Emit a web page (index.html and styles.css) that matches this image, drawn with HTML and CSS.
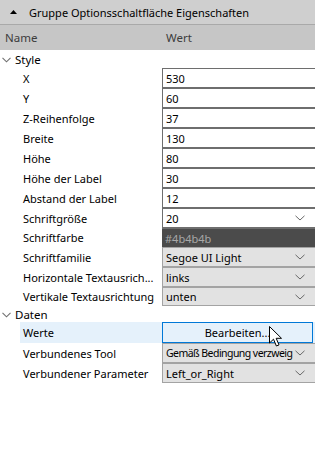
FILE: index.html
```html
<!DOCTYPE html>
<html>
<head>
<meta charset="utf-8">
<link rel="stylesheet" href="styles.css">
</head>
<body>
<div class="panel">
  <div class="titlebar">
    <svg class="tri" width="7" height="4" viewBox="0 0 7 4"><path d="M0 4 L3.5 0 L7 4 Z" fill="#000"/></svg>
    <span>Gruppe Optionsschaltfläche Eigenschaften</span>
  </div>
  <div class="colhead">
    <span class="c-name">Name</span>
    <span class="c-wert">Wert</span>
  </div>

  <div class="group">
    <svg class="chev" width="9" height="6" viewBox="0 0 9 6"><path d="M0.5 0.8 L4.5 4.8 L8.5 0.8" fill="none" stroke="#707070" stroke-width="1.1"/></svg>
    <span>Style</span>
  </div>
  <div class="row"><span class="lbl">X</span><div class="val text">530</div></div>
  <div class="row"><span class="lbl">Y</span><div class="val text">60</div></div>
  <div class="row"><span class="lbl">Z-Reihenfolge</span><div class="val text">37</div></div>
  <div class="row"><span class="lbl">Breite</span><div class="val text">130</div></div>
  <div class="row"><span class="lbl">Höhe</span><div class="val text">80</div></div>
  <div class="row"><span class="lbl">Höhe der Label</span><div class="val text">30</div></div>
  <div class="row"><span class="lbl">Abstand der Label</span><div class="val text">12</div></div>
  <div class="row"><span class="lbl">Schriftgröße</span><div class="val text combo"><span class="vt">20</span><svg class="dd" width="10" height="6" viewBox="0 0 10 6"><path d="M0.5 0.8 L5 5 L9.5 0.8" fill="none" stroke="#6a6a6a" stroke-width="1"/></svg></div></div>
  <div class="row short"><span class="lbl">Schriftfarbe</span><div class="val color">#4b4b4b</div></div>
  <div class="row"><span class="lbl">Schriftfamilie</span><div class="val select"><span class="vt">Segoe UI Light</span><svg class="dd" width="10" height="6" viewBox="0 0 10 6"><path d="M0.5 0.8 L5 5 L9.5 0.8" fill="none" stroke="#6a6a6a" stroke-width="1"/></svg></div></div>
  <div class="row"><span class="lbl">Horizontale Textausrich...</span><div class="val select"><span class="vt">links</span><svg class="dd" width="10" height="6" viewBox="0 0 10 6"><path d="M0.5 0.8 L5 5 L9.5 0.8" fill="none" stroke="#6a6a6a" stroke-width="1"/></svg></div></div>
  <div class="row short"><span class="lbl">Vertikale Textausrichtung</span><div class="val select"><span class="vt">unten</span><svg class="dd" width="10" height="6" viewBox="0 0 10 6"><path d="M0.5 0.8 L5 5 L9.5 0.8" fill="none" stroke="#6a6a6a" stroke-width="1"/></svg></div></div>

  <div class="group g2">
    <svg class="chev" width="9" height="6" viewBox="0 0 9 6"><path d="M0.5 0.8 L4.5 4.8 L8.5 0.8" fill="none" stroke="#707070" stroke-width="1.1"/></svg>
    <span>Daten</span>
  </div>
  <div class="row selected"><span class="lbl">Werte</span><div class="val btnwrap"><div class="btn">Bearbeiten...</div>
    <svg class="cursor" width="14" height="22" viewBox="0 0 14 22"><path d="M0.5 0.5 L0.5 17 L4.5 13.2 L7.4 20 L10 18.9 L7.2 12.3 L12.5 12.3 Z" fill="#fff" stroke="#000" stroke-width="1" stroke-linejoin="miter"/></svg>
  </div></div>
  <div class="row"><span class="lbl">Verbundenes Tool</span><div class="val select tightval"><span class="vt tight">Gemäß Bedingung verzweig</span><svg class="dd" width="10" height="6" viewBox="0 0 10 6"><path d="M0.5 0.8 L5 5 L9.5 0.8" fill="none" stroke="#6a6a6a" stroke-width="1"/></svg></div></div>
  <div class="row"><span class="lbl">Verbundener Parameter</span><div class="val select"><span class="vt">Left_or_Right</span><svg class="dd" width="10" height="6" viewBox="0 0 10 6"><path d="M0.5 0.8 L5 5 L9.5 0.8" fill="none" stroke="#6a6a6a" stroke-width="1"/></svg></div></div>
</div>
</body>
</html>
```
FILE: styles.css
```css
html, body {
  margin: 0;
  padding: 0;
  background: #ffffff;
  overflow: hidden;
}
body {
  width: 315px;
  height: 472px;
  font-family: "Noto Sans", "Open Sans", sans-serif;
  font-size: 11px;
  color: #000;
}
.panel {
  display: flex;
  flex-direction: column;
  width: 315px;
}
.titlebar {
  height: 24px;
  background: #cfcfcf;
  border-bottom: 1px solid #a9a9a9;
  display: flex;
  align-items: center;
  gap: 12px;
  padding-left: 10px;
  box-sizing: content-box;
}
.titlebar .tri {
  margin-top: -1px;
}
.colhead {
  height: 25px;
  background: #c6c6c6;
  display: grid;
  grid-template-columns: 162px 1fr;
  align-items: center;
  color: #3c3c3c;
  font-size: 11.5px;
}
.c-name { padding-left: 5px; }
.c-wert { padding-left: 4px; }
.group {
  height: 18px;
  display: flex;
  align-items: center;
  gap: 4px;
  padding-left: 2px;
  font-size: 11.5px;
}
.group.g2 { height: 16px; }
.group .chev { margin-top: 1px; }
.row {
  height: 20px;
  display: grid;
  grid-template-columns: 162px 155px;
  align-items: stretch;
}
.row.short { height: 19px; }
.row.selected { height: 21px; }
.lbl {
  padding-left: 23px;
  display: flex;
  align-items: center;
  white-space: nowrap;
  overflow: hidden;
}
.row.selected .lbl {
  background: #e5f1fb;
  margin-left: 20px;
  padding-left: 3px;
}
.val {
  box-sizing: border-box;
  display: flex;
  align-items: center;
  justify-content: space-between;
  gap: 4px;
  padding-left: 3px;
  padding-right: 12px;
  white-space: nowrap;
  overflow: hidden;
}
.vt {
  min-width: 0;
}
.val.tightval {
  gap: 3px;
  padding-right: 12px;
}
.vt.tight {
  font-size: 10.5px;
  letter-spacing: -0.55px;
}
.val.text {
  background: #fff;
  border: 1px solid #6e6e6e;
  border-right: none;
}
.val.color {
  background: #4b4b4b;
  color: #a8a8a8;
  border-top: 1px solid #6e6e6e;
}
.val.select {
  background: #e2e2e2;
  border: 1px solid #a3a3a3;
  border-right: none;
}
.dd {
  flex: none;
}
.val.btnwrap {
  padding: 0;
  position: relative;
  overflow: visible;
  background: #e5f1fb;
}
.btn {
  box-sizing: border-box;
  width: 151px;
  height: 21px;
  border: 1px solid #0078d7;
  background: #e5f1fb;
  display: flex;
  align-items: center;
  justify-content: center;
}
.cursor {
  position: absolute;
  left: 107px;
  top: 4px;
}
```
